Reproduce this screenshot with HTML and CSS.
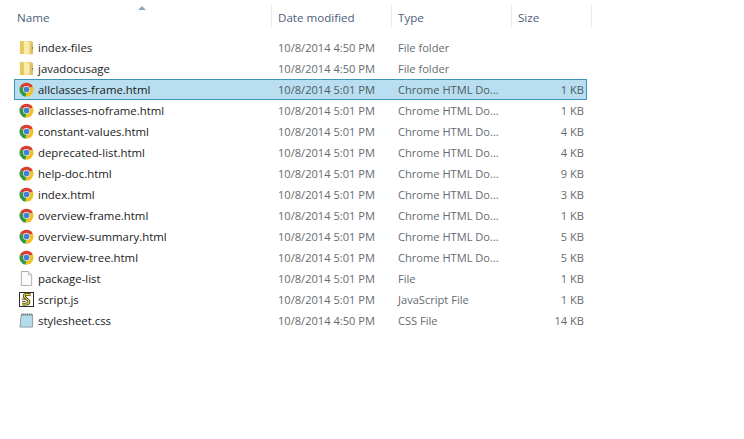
FILE: index.html
```html
<!DOCTYPE html>
<html lang="en">
<head>
    <meta charset="UTF-8">
    <title>Explorer</title>
    <link rel="stylesheet" href="styles.css">
</head>
<body>
    <svg class="defs" width="0" height="0">
        <symbol id="chrome" viewBox="0 0 16 16">
            <path d="M1.2 4.8 A7.8 7.8 0 0 1 14.8 4.8 L8 8Z" fill="#d8412f"/>
            <path d="M14.8 4.8 A7.8 7.8 0 0 1 7 15.7 L8 8Z" fill="#efc125"/>
            <path d="M7 15.7 A7.8 7.8 0 0 1 1.2 4.8 L8 8Z" fill="#35983f"/>
            <circle cx="8" cy="8" r="3.7" fill="#eef1f4"/>
            <circle cx="8" cy="8" r="3" fill="#3f7fd6"/>
        </symbol>
        <symbol id="folder" viewBox="0 0 16 16">
            <path d="M1 1 H13 L15 2.5 V15 H2 Q1 15 1 14Z" fill="#e6cb70"/>
            <path d="M1 1 H5 L5.5 15 H2 Q1 15 1 14Z" fill="#e8c860"/>
            <path d="M5 .5 L11.5 2.5 V16 L5.5 15Z" fill="#f8eca8"/>
            <path d="M11.5 2.5 L15 2.5 V15 H11.5Z" fill="#dcc06a"/>
            <rect x="14" y="7.5" width="1" height="2" fill="#6f8f40"/>
        </symbol>
        <symbol id="blank" viewBox="0 0 16 16">
            <path d="M2.5 .5 H10 L13.5 4 V15.5 H2.5Z" fill="#fbfbfb" stroke="#a8a8a8"/>
            <path d="M10 .5 V4 H13.5" fill="#eee" stroke="#bcbcbc"/>
        </symbol>
        <symbol id="script" viewBox="0 0 16 16">
            <rect x=".5" y=".5" width="15" height="15" fill="#fff" stroke="#222"/>
            <path d="M12.5 2.5 H7.5 Q4.5 3 6 5.5 L10.5 9.5 Q11 12.5 8 13 H3.5" fill="none" stroke="#3a3a16" stroke-width="3"/>
            <path d="M12.5 2.5 H7.5 Q4.5 3 6 5.5 L10.5 9.5 Q11 12.5 8 13 H3.5" fill="none" stroke="#e6d63e" stroke-width="1.3"/>
            <path d="M3 7.5 H7 M3.5 10 H7" stroke="#3a3a16" stroke-width="1"/>
        </symbol>
        <symbol id="css" viewBox="0 0 16 16">
            <path d="M2.5 1.5 H14.5 V15 H1Z" fill="#a9d6e4" stroke="#8a9aa0"/>
            <path d="M3.2 2.5 H13.5 V14 H2.2Z" fill="#b4dce9"/>
            <path d="M3 .5 V3 M5 .5 V3 M7 .5 V3 M9 .5 V3 M11 .5 V3 M13 .5 V3" stroke="#6f8088" stroke-width="1"/>
        </symbol>
    </svg>

    <div class="listing">
        <div class="header">
            <span class="sort-arrow"></span>
            <div class="col col-name">Name</div>
            <div class="col col-date">Date modified</div>
            <div class="col col-type">Type</div>
            <div class="col col-size">Size</div>
        </div>
        <div class="rows">
            <div class="row">
                <div class="name"><svg class="icon"><use href="#folder"/></svg>index-files</div>
                <div class="date">10/8/2014 4:50 PM</div><div class="type">File folder</div><div class="size"></div>
            </div>
            <div class="row">
                <div class="name"><svg class="icon"><use href="#folder"/></svg>javadocusage</div>
                <div class="date">10/8/2014 4:50 PM</div><div class="type">File folder</div><div class="size"></div>
            </div>
            <div class="row selected">
                <div class="name"><svg class="icon"><use href="#chrome"/></svg>allclasses-frame.html</div>
                <div class="date">10/8/2014 5:01 PM</div><div class="type">Chrome HTML Do...</div><div class="size">1 KB</div>
            </div>
            <div class="row">
                <div class="name"><svg class="icon"><use href="#chrome"/></svg>allclasses-noframe.html</div>
                <div class="date">10/8/2014 5:01 PM</div><div class="type">Chrome HTML Do...</div><div class="size">1 KB</div>
            </div>
            <div class="row">
                <div class="name"><svg class="icon"><use href="#chrome"/></svg>constant-values.html</div>
                <div class="date">10/8/2014 5:01 PM</div><div class="type">Chrome HTML Do...</div><div class="size">4 KB</div>
            </div>
            <div class="row">
                <div class="name"><svg class="icon"><use href="#chrome"/></svg>deprecated-list.html</div>
                <div class="date">10/8/2014 5:01 PM</div><div class="type">Chrome HTML Do...</div><div class="size">4 KB</div>
            </div>
            <div class="row">
                <div class="name"><svg class="icon"><use href="#chrome"/></svg>help-doc.html</div>
                <div class="date">10/8/2014 5:01 PM</div><div class="type">Chrome HTML Do...</div><div class="size">9 KB</div>
            </div>
            <div class="row">
                <div class="name"><svg class="icon"><use href="#chrome"/></svg>index.html</div>
                <div class="date">10/8/2014 5:01 PM</div><div class="type">Chrome HTML Do...</div><div class="size">3 KB</div>
            </div>
            <div class="row">
                <div class="name"><svg class="icon"><use href="#chrome"/></svg>overview-frame.html</div>
                <div class="date">10/8/2014 5:01 PM</div><div class="type">Chrome HTML Do...</div><div class="size">1 KB</div>
            </div>
            <div class="row">
                <div class="name"><svg class="icon"><use href="#chrome"/></svg>overview-summary.html</div>
                <div class="date">10/8/2014 5:01 PM</div><div class="type">Chrome HTML Do...</div><div class="size">5 KB</div>
            </div>
            <div class="row">
                <div class="name"><svg class="icon"><use href="#chrome"/></svg>overview-tree.html</div>
                <div class="date">10/8/2014 5:01 PM</div><div class="type">Chrome HTML Do...</div><div class="size">5 KB</div>
            </div>
            <div class="row">
                <div class="name"><svg class="icon"><use href="#blank"/></svg>package-list</div>
                <div class="date">10/8/2014 5:01 PM</div><div class="type">File</div><div class="size">1 KB</div>
            </div>
            <div class="row">
                <div class="name"><svg class="icon"><use href="#script"/></svg>script.js</div>
                <div class="date">10/8/2014 5:01 PM</div><div class="type">JavaScript File</div><div class="size">1 KB</div>
            </div>
            <div class="row">
                <div class="name"><svg class="icon"><use href="#css"/></svg>stylesheet.css</div>
                <div class="date">10/8/2014 4:50 PM</div><div class="type">CSS File</div><div class="size">14 KB</div>
            </div>
        </div>
    </div>
</body>
</html>
```

FILE: styles.css
```css
body {
    font-family: 'Open Sans', 'Noto Sans', sans-serif;
    margin: 0;
    background: white;
    min-height: 100vh;
    overflow: hidden;
}
.defs {
    display: block;
    height: 0;
}
.listing {
    width: 592px;
    font-size: 11.4px;
}
/* Column header */
.header {
    position: relative;
    display: grid;
    grid-template-columns: 272px 120px 120px 80px;
    height: 37px;
    padding-top: 5px;
    box-sizing: border-box;
    align-items: start;
    color: #4c607a;
    font-size: 11.6px;
}
.sort-arrow {
    position: absolute;
    left: 138px;
    top: 6px;
    border-left: 4px solid transparent;
    border-right: 4px solid transparent;
    border-bottom: 4px solid #8fa6bd;
}
.col {
    padding: 5px 0 0 6px;
    border-right: 1px solid #e9edf1;
    height: 22px;
    box-sizing: border-box;
}
.col-name {
    padding-left: 17px;
}
/* File rows */
.rows {
    margin-left: 14px;
    width: 573px;
}
.row {
    display: grid;
    grid-template-columns: 258px 120px 120px 1fr;
    height: 21px;
    box-sizing: border-box;
    align-items: center;
    color: #666b70;
    white-space: nowrap;
    border: 1px solid transparent;
}
.row.selected {
    background: #b8deef;
    border-color: #3d93b8;
    color: #4f5c64;
}
.name {
    display: flex;
    align-items: center;
    color: #1a1a1a;
    padding-left: 4px;
}
.icon {
    width: 15px;
    height: 15px;
    margin-right: 4px;
    flex: none;
}
.date, .type, .size {
    font-size: 11.1px;
}
.date, .type {
    padding-left: 5px;
}
.size {
    text-align: right;
    padding-right: 2px;
}
```
